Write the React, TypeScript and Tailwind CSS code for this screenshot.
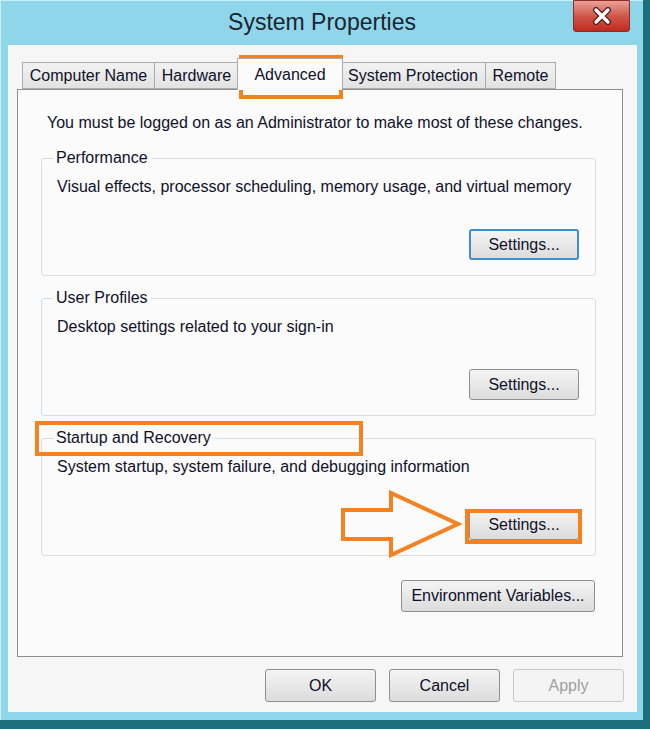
import React from "react";

const font = { fontFamily: '"Liberation Sans", Arial, sans-serif' };

function Btn({
  children,
  className = "",
  focused = false,
  disabled = false,
}: {
  children: React.ReactNode;
  className?: string;
  focused?: boolean;
  disabled?: boolean;
}) {
  const border = focused
    ? "border-2 border-[#3d8fd0]"
    : disabled
    ? "border border-[#c8c8c8]"
    : "border border-[#8f8f8f]";
  const bg = disabled
    ? "bg-[#f4f4f4] text-[#a0a0a0]"
    : "bg-gradient-to-b from-[#f4f4f4] to-[#dcdcdc] text-[#10102a]";
  return (
    <div
      className={`flex items-center justify-center rounded-[3px] text-[16px] ${border} ${bg} ${className}`}
    >
      {children}
    </div>
  );
}

function GroupBox({
  title,
  desc,
  focused = false,
  btnClass = "",
}: {
  title: string;
  desc: string;
  focused?: boolean;
  btnClass?: string;
}) {
  return (
    <div className="relative h-[118px] w-[555px] rounded-[3px] border border-[#d6dde3]">
      <div className="absolute left-[11px] top-[-11px] bg-[#fbfbfb] px-[3px] text-[16px] leading-[20px] text-[#10102a]">
        {title}
      </div>
      <div className="flex h-full flex-col pl-[15px] pr-[16px] pt-[18px]">
        <div className="text-[16px] leading-[20px] text-[#10102a]">{desc}</div>
        <div className="mt-auto mb-[15px] flex justify-end">
          <Btn focused={focused} className={`h-[31px] w-[110px] ${btnClass}`}>
            Settings...
          </Btn>
        </div>
      </div>
    </div>
  );
}

export default function App() {
  const tabs = [
    { label: "Computer Name", w: 133 },
    { label: "Hardware", w: 84 },
    { label: "Advanced", w: 102, sel: true },
    { label: "System Protection", w: 145 },
    { label: "Remote", w: 70 },
  ];
  return (
    <div
      className="relative h-[729px] w-[650px] overflow-hidden bg-[#1b6f7c]"
      style={font}
    >
      {/* window frame */}
      <div className="flex h-[720px] w-[643px] flex-col border-l border-t border-[#c8eef8] bg-[#8fd6ea]">
        {/* title bar */}
        <div className="relative flex h-[44px] items-center justify-center">
          <div className="mt-[-1px] text-[23px] text-[#1c2430]">System Properties</div>
          <div className="absolute right-[13px] top-[-1px] flex h-[32px] w-[57px] items-center justify-center rounded-b-[3px] border border-[#8e2a22] bg-gradient-to-b from-[#e8a198] via-[#d0554a] to-[#c0281c]">
            <svg width="22" height="18" viewBox="0 0 22 18">
              <path d="M5 3 L17 15 M17 3 L5 15" stroke="#4a1a16" strokeWidth="6" strokeLinecap="round" />
              <path d="M5 3 L17 15 M17 3 L5 15" stroke="#ffffff" strokeWidth="3.5" strokeLinecap="round" />
            </svg>
          </div>
        </div>
        {/* client */}
        <div className="ml-[7px] mr-[6px] flex h-[667px] flex-col bg-[#f6f6f6]">
          {/* tabs */}
          <div className="ml-[14px] mt-[13px] flex h-[31px] items-end">
            {tabs.map((t) =>
              t.sel ? (
                <div
                  key={t.label}
                  className="relative z-10 mx-[-2px] mb-[-1px] flex h-[32px] items-start justify-center border border-b-0 border-[#acacac] bg-[#fbfbfb] pt-[4px] text-[16px] text-[#10102a]"
                  style={{ width: t.w + 4 }}
                >
                  {t.label}
                </div>
              ) : (
                <div
                  key={t.label}
                  className="flex h-[27px] items-center justify-center border border-l-0 border-[#acacac] bg-gradient-to-b from-[#f2f2f2] to-[#e2e2e2] text-[16px] text-[#10102a] first:border-l"
                  style={{ width: t.w }}
                >
                  {t.label}
                </div>
              )
            )}
          </div>
          {/* panel */}
          <div className="ml-[9px] flex h-[568px] w-[606px] flex-col border border-[#8f8f8f] bg-[#fbfbfb] pl-[23px]">
            <div className="ml-[6px] mt-[23px] text-[16px] leading-[20px] text-[#10102a]">
              You must be logged on as an Administrator to make most of these changes.
            </div>
            <div className="mt-[25px] flex flex-col gap-[22px]">
              <GroupBox
                title="Performance"
                desc="Visual effects, processor scheduling, memory usage, and virtual memory"
                focused
              />
              <GroupBox title="User Profiles" desc="Desktop settings related to your sign-in" />
              <GroupBox
                title="Startup and Recovery"
                desc="System startup, system failure, and debugging information"
              />
            </div>
            <div className="mr-[27px] mt-[24px] flex justify-end">
              <Btn className="h-[32px] w-[194px]">Environment Variables...</Btn>
            </div>
          </div>
          {/* bottom buttons */}
          <div className="mr-[13px] mt-[12px] flex justify-end gap-[13px]">
            <Btn className="h-[33px] w-[111px]">OK</Btn>
            <Btn className="h-[33px] w-[111px]">Cancel</Btn>
            <Btn disabled className="h-[33px] w-[111px]">
              Apply
            </Btn>
          </div>
        </div>
      </div>

      {/* orange annotation overlays */}
      <div className="pointer-events-none absolute left-[239px] top-[55px] h-[44px] w-[104px] border-[4px] border-[#f5811f]" />
      <div className="pointer-events-none absolute left-[35px] top-[421px] h-[35px] w-[328px] border-[4px] border-[#f5811f]" />
      <div className="pointer-events-none absolute left-[465px] top-[509px] h-[35px] w-[117px] border-[4px] border-[#f5811f]" />
      <svg
        className="pointer-events-none absolute left-[340px] top-[490px]"
        width="124"
        height="68"
        viewBox="0 0 124 68"
      >
        <path
          d="M3 20 L51 20 L51 3 L118 34 L51 65 L51 49 L3 49 Z"
          fill="#fbfbfb"
          stroke="#f5811f"
          strokeWidth="4"
          strokeLinejoin="miter"
        />
      </svg>
    </div>
  );
}
